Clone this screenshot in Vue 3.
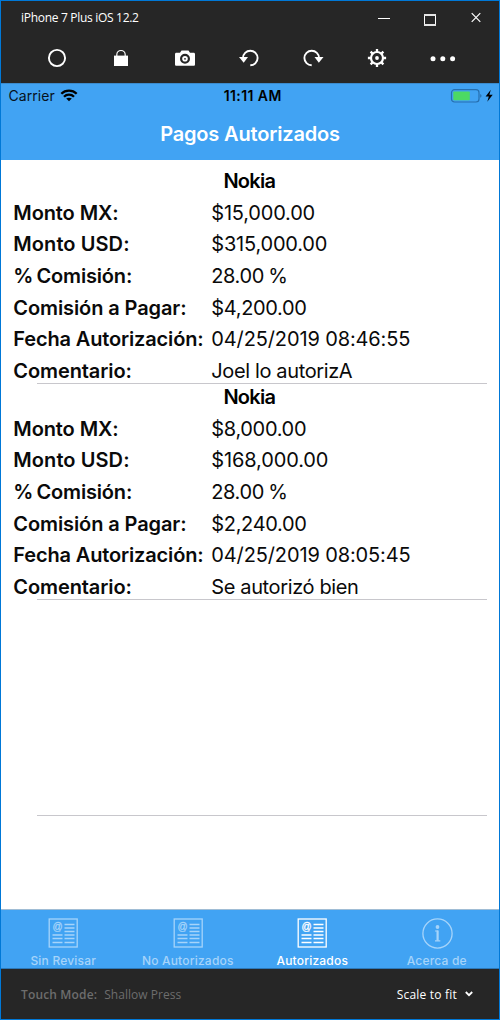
<script setup>
const payments = [
  {
    name: 'Nokia',
    rows: [
      ['Monto MX:', '$15,000.00', 'l-mx', 'v-a'],
      ['Monto USD:', '$315,000.00', 'l-usd', 'v-a'],
      ['% Comisión:', '28.00 %', 'l-com', 'v-p'],
      ['Comisión a Pagar:', '$4,200.00', 'l-pay', 'v-s'],
      ['Fecha Autorización:', '04/25/2019 08:46:55', 'l-date', 'v-d'],
      ['Comentario:', 'Joel lo autorizA', 'l-note', 'v-t']
    ]
  },
  {
    name: 'Nokia',
    rows: [
      ['Monto MX:', '$8,000.00', 'l-mx', 'v-s'],
      ['Monto USD:', '$168,000.00', 'l-usd', 'v-d'],
      ['% Comisión:', '28.00 %', 'l-com', 'v-p'],
      ['Comisión a Pagar:', '$2,240.00', 'l-pay', 'v-s'],
      ['Fecha Autorización:', '04/25/2019 08:05:45', 'l-date', 'v-d'],
      ['Comentario:', 'Se autorizó bien', 'l-note', 'v-t']
    ]
  },
  { name: '', rows: [] }
]

const tabs = [
  { label: 'Sin Revisar', icon: 'news', active: false },
  { label: 'No Autorizados', icon: 'news', active: false },
  { label: 'Autorizados', icon: 'news', active: true },
  { label: 'Acerca de', icon: 'info', active: false }
]
</script>

<template>
  <div class="window">
    <header class="chrome">
      <div class="titlebar">
        <span class="title">iPhone 7 Plus iOS 12.2</span>
        <svg class="controls" width="106" height="20" viewBox="0 0 106 20" fill="none" stroke="#fff">
          <path d="M0 10.5H12" />
          <path d="M46.5 6v12M57.500 6v12" />
          <path d="M46 7H58M46 17H58" stroke-width="2" stroke="#e4e4e4" />
          <path d="M93.700 5.200l8.600 8.600M102.300 5.200l-8.600 8.600" stroke-width="1.200" />
        </svg>
      </div>
      <div class="tools">
        <svg viewBox="0 0 24 24"><circle cx="12" cy="12" r="8.100" fill="none" stroke="#fff" stroke-width="1.900" /></svg>
        <svg viewBox="0 0 24 24">
          <rect x="5" y="9.600" width="14" height="10.400" fill="#fff" />
          <path d="M7.800 10V8.700a4.200 4.200 0 0 1 8.400 0V10" fill="none" stroke="#fff" stroke-width="1.200" />
        </svg>
        <svg viewBox="0 0 24 24">
          <path d="M3.500 6.800H7l1.500-2.200h7L17 6.800h3.500c1 0 1.500.5 1.500 1.500v10c0 1-.5 1.500-1.500 1.500h-17c-1 0-1.500-.5-1.500-1.500v-10c0-1 .5-1.500 1.500-1.500z" fill="#fff" />
          <circle cx="12" cy="12.800" r="3.900" fill="none" stroke="#262626" stroke-width="2.200" />
          <circle cx="12" cy="12.800" r=".9" fill="#262626" />
        </svg>
        <svg viewBox="0 0 24 24">
          <path d="M6 13V12a7.300 7.300 0 1 1 7.300 7.300" fill="none" stroke="#fff" stroke-width="1.900" />
          <path d="M2 11h9l-4.300 5.800z" fill="#fff" />
        </svg>
        <svg viewBox="0 0 24 24">
          <path d="M18 13V12a7.300 7.300 0 1 0-7.300 7.300" fill="none" stroke="#fff" stroke-width="1.900" />
          <path d="M22.500 11h-9l4.300 5.800z" fill="#fff" />
        </svg>
        <svg viewBox="0 0 24 24" fill="none" stroke="#fff">
          <circle cx="12" cy="12" r="6" stroke-width="2.200" />
          <path d="M12 2.900V6M12 18v3.100M2.900 12H6M18 12h3.100M5.600 5.600l2 2M16.400 16.400l2 2M18.400 5.600l-2 2M7.600 16.400l-2 2" stroke-width="2.300" />
          <circle cx="12" cy="12" r="1.900" fill="#fff" stroke="none" />
        </svg>
        <svg class="more" viewBox="0 0 28 24" fill="#fff">
          <circle cx="4" cy="12.800" r="2.500" /><circle cx="13.800" cy="12.800" r="2.500" /><circle cx="23.600" cy="12.800" r="2.500" />
        </svg>
      </div>
    </header>

    <section class="ios-head">
      <div class="status">
        <span class="carrier">Carrier
          <svg width="18" height="13" viewBox="0 0 18 13" fill="none" stroke="#000" stroke-width="2.300">
            <path d="M1.300 4.800C5.500.6 12.500.6 16.700 4.800M4 7.800c2.700-2.800 7.300-2.800 10 0" />
            <path d="M9 12.300L6.200 9.600c1.600-1.300 4-1.300 5.600 0z" fill="#000" stroke="none" />
          </svg>
        </span>
        <span class="clock">11:11 AM</span>
        <svg class="battery" width="44" height="14" viewBox="0 0 44 14">
          <rect x="1.500" y=".7" width="27.500" height="12.300" rx="3" fill="none" stroke="#266faf" stroke-width="1.200" />
          <rect x="3.300" y="2.500" width="16.500" height="8.700" rx=".8" fill="#4cd964" />
          <path d="M30.300 5c1.500.6 1.500 3.100 0 3.700z" fill="#266398" />
          <path d="M40.800.8l-5.200 6.700h3.200l-1.500 5.300 5.400-7h-3.300z" fill="#000" />
        </svg>
      </div>
      <h1>Pagos Autorizados</h1>
    </section>

    <main class="list">
      <article v-for="(p, i) in payments" :key="i" class="payment">
        <h2>{{ p.name }}</h2>
        <div v-for="r in p.rows" :key="r[0]" class="row">
          <span class="label"><b :class="r[2]">{{ r[0] }}</b></span>
          <span class="value" :class="r[3]">{{ r[1] }}</span>
        </div>
      </article>
    </main>

    <nav class="tabs">
      <div v-for="t in tabs" :key="t.label" class="tab" :class="{ active: t.active }">
        <svg v-if="t.icon === 'news'" width="30" height="30" viewBox="0 0 30 30" fill="none" stroke="currentColor">
          <rect x="1.200" y="1" width="28" height="28" stroke-width="1.300" />
          <path d="M16.500 6.500h10M16.500 10h10M16.500 13.500h10M4.500 17h10M16.500 17h10M4.500 20.500h10M16.500 20.500h10M4.500 24.500h10M16.500 24.500h10" stroke-width="1.300" />
          <text x="9.500" y="12" text-anchor="middle" class="at">@</text>
        </svg>
        <svg v-else class="info" width="31" height="31" viewBox="0 0 31 31" fill="none" stroke="currentColor">
          <circle cx="15.500" cy="15.500" r="14.600" stroke-width="1.300" />
          <circle cx="15.500" cy="9" r="1.900" fill="currentColor" stroke="none" />
          <path d="M13 13h3M13 22.800h5.300" stroke-width="1.200" />
          <path d="M15.600 12.500v10.300" stroke-width="2.200" />
        </svg>
        <span>{{ t.label }}</span>
      </div>
    </nav>

    <footer class="footer">
      <span class="mode"><b>Touch Mode:</b><span class="press">Shallow Press</span></span>
      <span class="scale"><span>Scale to fit</span>
        <svg width="8" height="6" viewBox="0 0 8 6" fill="none" stroke="#fff" stroke-width="1.800"><path d="M.8 1L4 4.200 7.200 1" /></svg>
      </span>
    </footer>
  </div>
</template>

<style>
body { margin: 0; background: #262626; }
</style>

<style scoped>
.window {
  box-sizing: border-box;
  width: 500px;
  height: 1020px;
  border: 1px solid #0078d7;
  background: #fff;
  display: flex;
  flex-direction: column;
  overflow: hidden;
  font-family: Inter, "Liberation Sans", sans-serif;
  white-space: nowrap;
}
.chrome { height: 82px; background: #262626; flex: none; font-family: "Open Sans", "Noto Sans", sans-serif; color: #fff; }
.titlebar { display: flex; justify-content: space-between; align-items: flex-start; height: 38px; box-sizing: border-box; padding: 7px 15px 0 20px; }
.title { font-size: 12px; line-height: 20px; letter-spacing: -0.3px; }
.tools { display: flex; padding-left: 44px; gap: 40px; padding-top: 6.5px; }
.tools svg { width: 24px; height: 24px; }
.tools .more { width: 28px; }

.ios-head { height: 77px; flex: none; background: #41a3f3; box-sizing: border-box; border-top: 1px solid #3b8bcd; }
.status { display: grid; grid-template-columns: 1fr auto 1fr; align-items: center; height: 24px; padding: 0 5px 0 7.5px; font-size: 14px; line-height: 16px; color: #06121c; }
.carrier { display: flex; align-items: center; gap: 5.5px; letter-spacing: 0.05px; margin-top: -1px; }
.carrier svg { margin-top: -1px; }
.clock { font-weight: 600; letter-spacing: 0.42px; margin-top: -1px; margin-left: 3px; color: #000; }
.battery { justify-self: end; margin-top: -1px; }
h1 { margin: 14px 0 0; text-align: center; font-size: 20px; line-height: 24px; font-weight: 600; letter-spacing: -0.17px; color: #fff; }

.list { flex: 1; min-height: 0; padding-top: 7.8px; overflow: hidden; }
.payment { position: relative; height: 216.1px; }
.payment::after { content: ""; position: absolute; left: 36px; right: 12px; bottom: 0; height: 1px; background: #c8c7cc; }
h2 { margin: 0; height: 29.8px; line-height: 26px; padding-right: 1.5px; text-align: center; font-size: 20px; font-weight: 600; letter-spacing: -0.75px; color: #000; }
.row { display: grid; grid-template-columns: 198px 1fr; height: 31.7px; line-height: 31.1px; padding-left: 12.3px; font-size: 20px; color: #0a0a0a; }
.label b { font-weight: 600; letter-spacing: -0.1px; }
.label .l-usd { letter-spacing: 0.08px; }
.label .l-com { letter-spacing: -0.18px; word-spacing: -1.5px; }
.label .l-date { letter-spacing: -0.15px; }
.v-a { letter-spacing: -0.2px; }
.v-s { letter-spacing: -0.33px; }
.v-d { letter-spacing: -0.13px; }
.v-p { letter-spacing: -0.4px; word-spacing: -0.8px; }
.v-t { letter-spacing: -0.37px; }

.tabs { height: 60px; flex: none; box-sizing: border-box; display: grid; grid-template-columns: repeat(4, 1fr); background: #41a3f3; border-top: 1px solid #a0bdd5; border-bottom: 1px solid #2c78b8; }
.tab { display: flex; flex-direction: column; align-items: center; color: #a6d4fa; padding-top: 8px; }
.tab span { font-size: 12px; line-height: 16px; margin-top: 5px; font-weight: 500; letter-spacing: 0.2px; }
.tab .info { margin-bottom: -1px; margin-left: 1px; }
.tab.active { color: #fff; }
.at { font: 10px "Liberation Sans", sans-serif; fill: currentColor; stroke: currentColor; stroke-width: 0.3px; }

.footer { flex: 1 0 auto; max-height: 50px; height: 50px; background: #262626; display: flex; justify-content: space-between; align-items: center; padding: 0 26px 0 20px; font-family: "Open Sans", "Noto Sans", sans-serif; font-size: 12px; color: #fff; }
.mode { color: #6d6d6d; }
.mode b { font-weight: 600; letter-spacing: 0.15px; }
.press { margin-left: 7px; letter-spacing: 0.05px; }
.scale { display: flex; align-items: center; gap: 8px; letter-spacing: 0.2px; }
</style>
